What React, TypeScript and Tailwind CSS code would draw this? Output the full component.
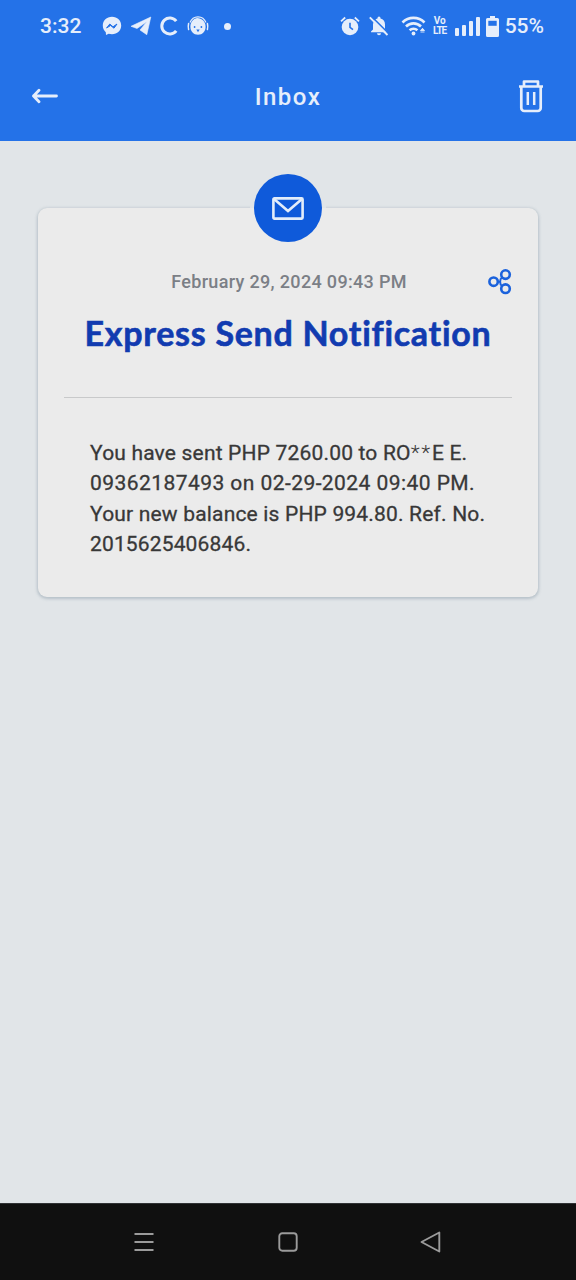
const StatusBar = () => {
    return (
        <div className="flex h-[52px] items-center justify-between pl-10 pr-8 text-[#e6eefb]">
            <div className="flex items-center">
                <span className="w-[62px] text-[21px] font-medium leading-none">3:32</span>

                {/* Messenger */}
                <svg width="20" height="20" viewBox="0 0 20 20" className="block">
                    <path d="M10 .8C4.700.8.8 4.600.8 9.600c0 2.700 1.100 5 3 6.600l.2 2.800 2.700-1.200c1 .3 2.100.5 3.300.5 5.300 0 9.200-3.800 9.200-8.700S15.300.8 10 .8z" fill="#e6eefb" />
                    <path d="M4.600 12l3.200-4 3.200 2.800 4-2.800-3 4.200-3.400-2.700z" fill="#2472e8" stroke="#2472e8" strokeWidth="1" strokeLinejoin="round" />
                </svg>

                {/* Telegram */}
                <svg width="22" height="20" viewBox="0 0 22 20" className="ml-[8px] block">
                    <path d="M20.800 1L1 10.300l6 2.200 9.800-6.700-6.800 8.200 6.800 4.700z" fill="#e6eefb" stroke="#e6eefb" strokeWidth=".6" strokeLinejoin="round" />
                </svg>

                {/* C */}
                <svg width="20" height="20" viewBox="0 0 20 20" className="ml-[7px] block">
                    <path d="M17.200 5.200A8 8 0 1 0 17.200 14.800" fill="none" stroke="#e6eefb" strokeWidth="3" />
                </svg>

                {/* Headset face */}
                <svg width="22" height="20" viewBox="0 0 22 20" className="ml-[8px] block">
                    <path d="M3 6.500C4.600 2.500 7.500.8 11 .8s6.400 1.700 8 5.700" fill="none" stroke="#e6eefb" strokeWidth="1.200" />
                    <path d="M1.600 7.500c-.5 2-.5 4 0 6M20.400 7.500c.5 2 .5 4 0 6" fill="none" stroke="#e6eefb" strokeWidth="1.500" strokeLinecap="round" />
                    <path d="M10 2c5 0 8.600 3.500 8.600 8.800 0 4.700-3.200 8-7.600 8s-7.600-3.300-7.600-8C3.400 6 6 3 10 2z" fill="#e6eefb" />
                    <circle cx="7.600" cy="11" r=".9" fill="#2472e8" />
                    <circle cx="14.400" cy="11" r=".9" fill="#2472e8" />
                    <path d="M9.300 13.500h3.400l-1.700 2.800z" fill="#2472e8" />
                </svg>

                <span className="ml-[15px] h-[7px] w-[7px] rounded-full bg-[#e6eefb]"></span>
            </div>

            <div className="flex items-center">
                {/* Alarm */}
                <svg width="20" height="20" viewBox="0 0 20 20" className="block">
                    <circle cx="10" cy="11" r="8.300" fill="#e6eefb" />
                    <path d="M1 5.300L5.200 1.500M19 5.300L14.800 1.500" stroke="#e6eefb" strokeWidth="1.800" />
                    <path d="M10 6.800v4.600l3 2.200" fill="none" stroke="#2472e8" strokeWidth="1.600" />
                </svg>

                {/* Muted bell */}
                <svg width="20" height="20" viewBox="0 0 20 20" className="ml-[9px] block">
                    <path d="M4.300 6.800C4.800 4.600 6.500 3 8.500 2.600V2a1.500 1.500 0 0 1 3 0v.6C14.300 3.200 16 5.500 16 8.500v5l2 2v.7H2v-.7l2-2v-5z" fill="#e6eefb" />
                    <path d="M8 17.200h4a2 2 0 0 1-4 0z" fill="#e6eefb" />
                    <path d="M2.300.3L20 18" stroke="#2472e8" strokeWidth="1.600" />
                    <path d="M.8 1.300L18.500 19" stroke="#e6eefb" strokeWidth="1.900" />
                </svg>

                {/* Wifi */}
                <svg width="26" height="20" viewBox="0 0 26 20" className="ml-[12px] block">
                    <path d="M1.500 6.500a15.500 15.500 0 0 1 22 0M5 10.500a10.500 10.500 0 0 1 15 0M8.600 14.300a5.800 5.800 0 0 1 7.800 0" fill="none" stroke="#e6eefb" strokeWidth="2.600" />
                    <circle cx="12.500" cy="17.500" r="1.900" fill="#e6eefb" />
                    <path d="M19.500 14.500l2-2.200 2 2.200zM19.500 16h4" fill="#e6eefb" stroke="#e6eefb" strokeWidth=".9" />
                </svg>

                <div className="ml-[6px] flex w-[14px] flex-col items-center text-[10px] font-bold leading-[10px]">
                    <span className="h-[10px]">Vo</span>
                    <span className="h-[10px] tracking-[-1px]">LTE</span>
                </div>

                {/* Signal */}
                <div className="ml-[8px] flex h-[20px] items-end gap-[3px]">
                    <span className="h-[8px] w-[4px] rounded-[1px] bg-[#e6eefb]"></span>
                    <span className="h-[11px] w-[4px] rounded-[1px] bg-[#e6eefb]"></span>
                    <span className="h-[15px] w-[4px] rounded-[1px] bg-[#e6eefb]"></span>
                    <span className="h-[19px] w-[4px] rounded-[1px] bg-[#e6eefb]"></span>
                </div>

                {/* Battery */}
                <svg width="13" height="21" viewBox="0 0 13 21" className="ml-[6px] block">
                    <path d="M4 0h5v2h2.500a1.500 1.500 0 0 1 1.500 1.500v16a1.500 1.500 0 0 1-1.500 1.500h-10A1.500 1.500 0 0 1 0 19.500v-16A1.500 1.500 0 0 1 1.500 2H4z" fill="#e6eefb" />
                    <path d="M2.300 4.800h8.400v5H2.300z" fill="#2472e8" />
                </svg>

                <span className="ml-[6px] text-[21px] font-medium leading-none">55%</span>
            </div>
        </div>
    )
}

const Header = () => {
    return (
        <div className="flex h-[88px] items-start justify-between pl-8 pr-8 pt-[27px] text-[#e6eefb]">
            <svg width="26" height="34" viewBox="0 0 26 34" className="block">
                <path d="M1.500 17H24.500M7 11.300L1.500 17L7 22.700" fill="none" stroke="currentColor" strokeWidth="2.800" strokeLinecap="round" strokeLinejoin="round" />
            </svg>
            <h1 className="pt-[5px] text-[24px] font-medium leading-[26px] tracking-[1.500px]">Inbox</h1>
            <svg width="26" height="34" viewBox="0 0 26 34" className="block">
                <path d="M1 7.500h24M6 7V2.500h14V7M3.300 8v21a3 3 0 0 0 3 3h13.400a3 3 0 0 0 3-3V8" fill="none" stroke="currentColor" strokeWidth="2.700" strokeLinejoin="round" />
                <path d="M9.800 13v13M16.200 13v13" stroke="currentColor" strokeWidth="2.500" />
            </svg>
        </div>
    )
}

const MessageCard = () => {
    return (
        <div className="relative mx-[38px] mt-[67px] h-[389px] rounded-[9px] bg-[#ebebeb] px-[26px] shadow-[0_1px_3px_1px_rgba(120,140,155,0.4)]">
            {/* Round mail badge */}
            <div className="absolute left-[212px] top-[-38px] flex h-[76px] w-[76px] items-center justify-center rounded-full bg-[linear-gradient(#e1e5e8_50%,#ebebeb_50%)]">
                <div className="flex h-[68px] w-[68px] items-center justify-center rounded-full bg-[#0f5ada]">
                    <svg width="32" height="23" viewBox="0 0 32 23" className="block">
                        <rect x="1.400" y="1.400" width="29.200" height="20.200" rx="1" fill="none" stroke="#e3edfa" strokeWidth="2.600" />
                        <path d="M2 2l14 12L30 2" fill="none" stroke="#e3edfa" strokeWidth="2.600" />
                    </svg>
                </div>
            </div>

            <div className="flex h-[92px] items-end justify-center">
                <span className="ml-[26px] flex-1 whitespace-nowrap text-center text-[18px] font-medium leading-[36px] tracking-[0.330px] text-[#7b7f86]">February 29, 2024 09:43 PM</span>
                <svg width="24" height="26" viewBox="0 0 24 26" className="mb-[5px] block">
                    <g fill="none" stroke="#1b62dc" strokeWidth="2.600">
                        <circle cx="5.600" cy="12.700" r="4.200" />
                        <circle cx="17.500" cy="5.600" r="4.300" />
                        <circle cx="17.500" cy="19.700" r="4.300" />
                        <path d="M9.500 12.700h2M14 8.500C11.500 10 11.500 15.500 14 17" strokeWidth="2" />
                    </g>
                </svg>
            </div>

            <h2 className="mt-[11px] whitespace-nowrap text-center font-['Lato'] text-[34px] font-bold leading-[44px] tracking-[0.720px] text-[#113bb0] [-webkit-text-stroke:0.6px_#113bb0]">Express Send Notification</h2>

            <div className="mt-[42px] border-t border-[#c8c9ca]"></div>

            <div className="mt-[40px] whitespace-nowrap pl-[26px] text-[21px] leading-[30.300px] text-[#383838] [-webkit-text-stroke:0.3px_#383838]">
                <p className="tracking-[0.180px]">You have sent PHP 7260.00 to RO<span className="font-light tracking-[1.700px] [-webkit-text-stroke:0]">**</span>E E.</p>
                <p className="tracking-[0.440px]">09362187493 on 02-29-2024 09:40 PM.</p>
                <p className="tracking-[0.180px]">Your new balance is PHP 994.80. Ref. No.</p>
                <p className="tracking-[0.150px]">2015625406846.</p>
            </div>
        </div>
    )
}

const NavBar = () => {
    return (
        <div className="flex h-[77px] items-center justify-between border-t border-[#303235] bg-[#101010] px-[134px] text-[#9b9b9b]">
            <svg width="20" height="20" viewBox="0 0 20 20" className="block">
                <path d="M.5 2h19M.5 10h19M.5 18h19" stroke="currentColor" strokeWidth="2" />
            </svg>
            <svg width="20" height="20" viewBox="0 0 20 20" className="ml-[2px] block">
                <rect x="1.300" y="1.300" width="17.400" height="17.400" rx="3" fill="none" stroke="currentColor" strokeWidth="1.900" />
            </svg>
            <svg width="22" height="22" viewBox="0 0 22 22" className="block">
                <path d="M19.300 1.500v19L1.500 11z" fill="none" stroke="currentColor" strokeWidth="1.900" strokeLinejoin="round" />
            </svg>
        </div>
    )
}

const App = () => {
    return (
        <div className="flex h-[1280px] w-[576px] flex-col overflow-hidden bg-[#e1e5e8] font-['Roboto',sans-serif]">
            <div className="h-[141px] shrink-0 bg-[#2472e8]">
                <StatusBar />
                <Header />
            </div>
            <div className="flex-1">
                <MessageCard />
            </div>
            <NavBar />
        </div>
    )
}

export default App;
